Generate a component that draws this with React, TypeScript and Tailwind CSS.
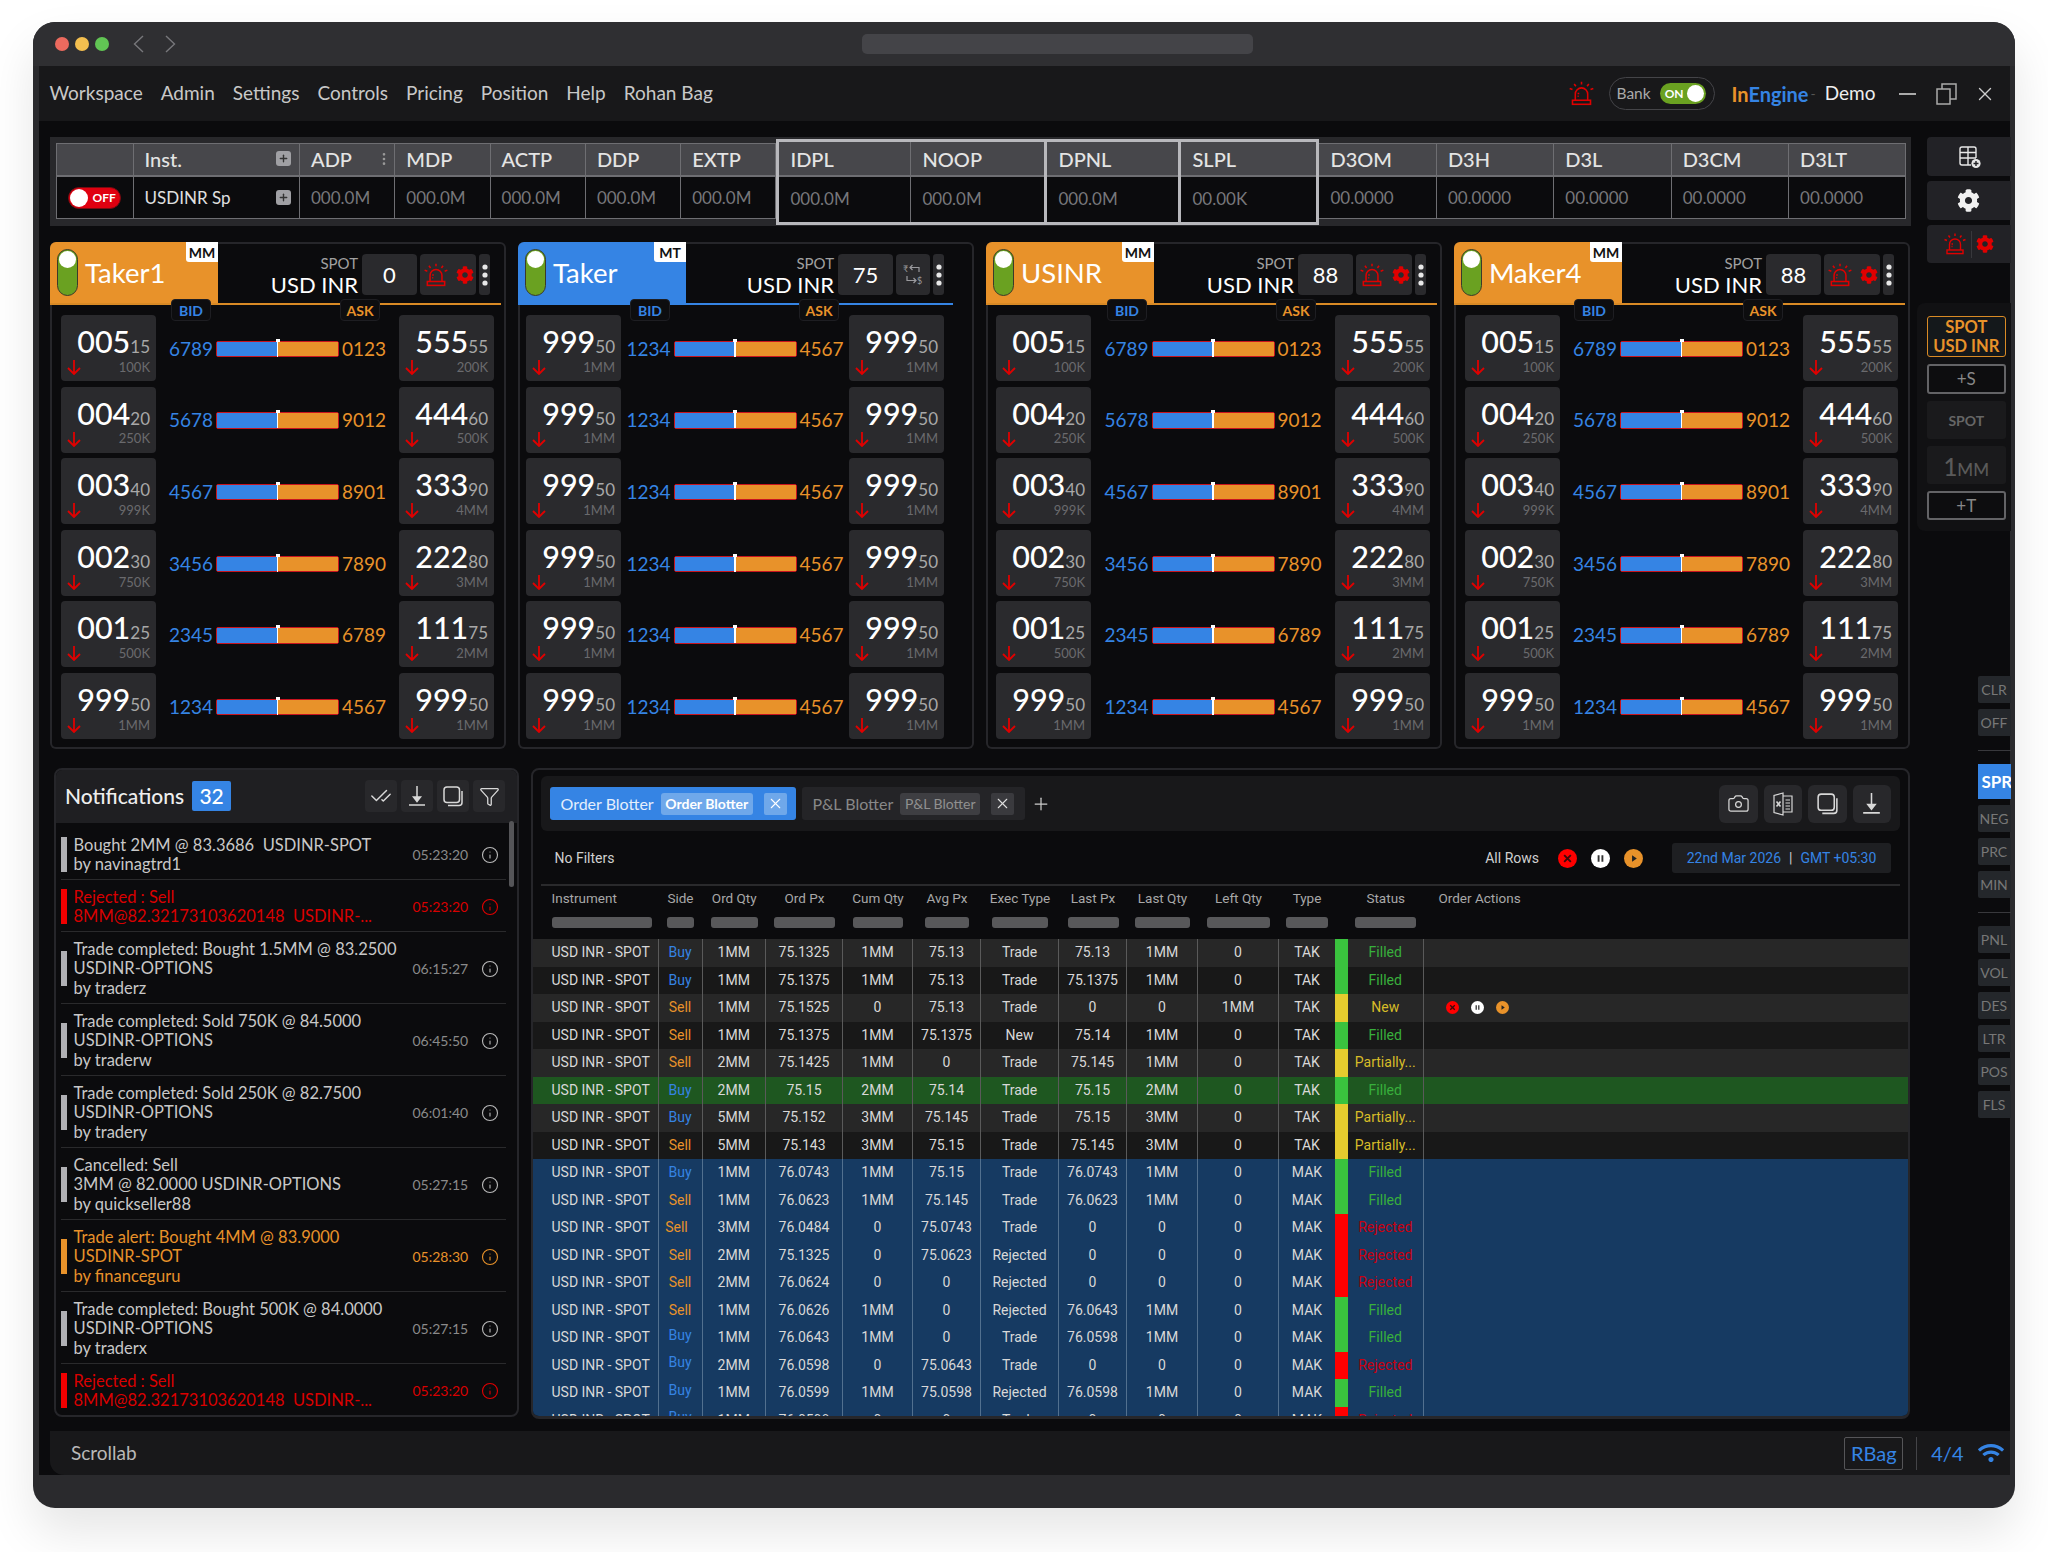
import { Camera, CheckCheck, EllipsisVertical, Funnel, Info, Plus, X } from 'lucide-react'
import { FaCog, FaWifi } from 'react-icons/fa'

const BLUE = '#3584e4'

const SirenIcon = ({ size = 24 }: { size?: number }) => (
  <svg width={size} height={size} viewBox="0 0 24 24" fill="none" stroke="#e00000" strokeWidth="1.4">
    <path d="M6.5 18V12.5a5.5 5.5 0 0 1 11 0V18" />
    <rect x="4" y="18" width="16" height="3.6" />
    <path d="M12 1.5v2.5M5.5 3.5l1.5 2M18.5 3.5l-1.5 2M1.5 7.5l2.5 1M22.5 7.5l-2.5 1M8.5 12h1.5M8.5 14.5h1" />
  </svg>
)

const TablePlusIcon = () => (
  <svg width="26" height="26" viewBox="0 0 26 26" fill="none" stroke="#e8e8e8" strokeWidth="1.4">
    <path d="M15 21H6a2 2 0 0 1-2-2V5a2 2 0 0 1 2-2h12a2 2 0 0 1 2 2v9M4 8.5h16M4 14h16M12 3v18" />
    <circle cx="20" cy="19.5" r="4.6" fill="#e8e8e8" stroke="none" />
    <path d="M20 17v5M17.5 19.5h5" stroke="#222226" />
  </svg>
)

const SwapIcon = () => (
  <svg width="22" height="24" viewBox="0 0 22 24" fill="none" stroke="#9a9a9e" strokeWidth="1.2">
    <text x="1" y="9" fontSize="9" fill="#9a9a9e" stroke="none">₹</text>
    <text x="15" y="21" fontSize="9" fill="#9a9a9e" stroke="none">$</text>
    <path d="M17 9V4.5H8M10.5 2L8 4.5 10.5 7M5 13v4.5h9M11.5 15l2.5 2.5-2.5 2.5" />
  </svg>
)

const CopyIcon = ({ size = 24, color = '#d8d8d8' }: { size?: number; color?: string }) => (
  <svg width={size} height={size} viewBox="0 0 24 24" fill="none" stroke={color} strokeWidth="1.5">
    <rect x="3" y="3" width="15.5" height="15.5" rx="3" />
    <path d="M21 7v11.5a3 3 0 0 1-3 3H7" />
  </svg>
)

const DownloadIcon = ({ size = 24, color = '#d8d8d8' }: { size?: number; color?: string }) => (
  <svg width={size} height={size} viewBox="0 0 24 24" fill="none" stroke={color} strokeWidth="1.5">
    <path d="M12 2v13M4 21h16" />
    <path d="M8.5 13h7L12 17.5z" fill={color} />
  </svg>
)

const ExcelIcon = () => (
  <svg width="24" height="26" viewBox="0 0 24 26" fill="none" stroke="#d8d8d8" strokeWidth="1.2">
    <path d="M12 2L3 4.5v17L12 24z" />
    <path d="M12 5h9v16h-9M14.5 9H19M14.5 12H19M14.5 15H19M14.5 18H19" />
    <path d="M5.5 10.5l4 5M9.5 10.5l-4 5" strokeWidth="1.6" />
  </svg>
)

const RoundAction = ({ kind, size }: { kind: 'x' | 'pause' | 'play'; size: number }) => {
  if (kind === 'x') {
    return (
      <svg width={size} height={size} viewBox="0 0 20 20">
        <circle cx="10" cy="10" r="10" fill="#ff0000" />
        <path d="M6.5 6.5l7 7M13.5 6.5l-7 7" stroke="#3a0a0a" strokeWidth="2" />
      </svg>
    )
  }
  if (kind === 'pause') {
    return (
      <svg width={size} height={size} viewBox="0 0 20 20">
        <circle cx="10" cy="10" r="10" fill="#ffffff" />
        <path d="M8 6.5v7M12 6.5v7" stroke="#333" strokeWidth="2" />
      </svg>
    )
  }
  return (
    <svg width={size} height={size} viewBox="0 0 20 20">
      <circle cx="10" cy="10" r="10" fill="#e8922a" />
      <path d="M8.5 6.5l5 3.5-5 3.5z" fill="#222" />
    </svg>
  )
}

const PlusChip = () => (
  <div className="ml-auto mr-[8px] flex h-[15px] w-[15px] items-center justify-center rounded-[3px] bg-[#a0a0a4]">
    <Plus size={11} strokeWidth={3} color="#333" />
  </div>
)

const menuItems = ['Workspace', 'Admin', 'Settings', 'Controls', 'Pricing', 'Position', 'Help', 'Rohan Bag']

const TitleBar = () => (
  <div className="flex h-[44px] shrink-0 items-center bg-[#2f2f32] pl-[22px]">
    <div className="flex gap-[6px]">
      <div className="h-[14px] w-[14px] rounded-full bg-[#ec6a5e]" />
      <div className="h-[14px] w-[14px] rounded-full bg-[#f4bf4f]" />
      <div className="h-[14px] w-[14px] rounded-full bg-[#61c554]" />
    </div>
    <div className="ml-[24px] flex gap-[21px]">
      <svg width="11" height="18" viewBox="0 0 11 18" fill="none" stroke="#77777b" strokeWidth="1.4">
        <path d="M10 1L1.5 9l8.5 8" />
      </svg>
      <svg width="11" height="18" viewBox="0 0 11 18" fill="none" stroke="#77777b" strokeWidth="1.4">
        <path d="M1 1l8.5 8L1 17" />
      </svg>
    </div>
    <div className="ml-[686px] h-[20px] w-[391px] rounded-[5px] bg-[#444448]" />
  </div>
)

const MenuBar = () => (
  <div className="flex h-[55px] shrink-0 items-center bg-[#18181a] pl-[11px] pr-[14px] text-[19px] text-[#c8c8c8]">
    <div className="flex gap-[18px]">
      {menuItems.map((item) => (
        <span key={item}>{item}</span>
      ))}
    </div>
    <div className="ml-auto">
      <SirenIcon size={27} />
    </div>
    <div className="ml-[14px] flex h-[33px] w-[106px] items-center rounded-full border-[1.5px] border-[#444448] pl-[7px]">
      <span className="text-[15.5px] text-[#aaaaaa]">Bank</span>
      <div className="ml-[9px] flex h-[21px] w-[46px] items-center justify-between rounded-full bg-[#6aa121] pl-[5px] pr-[2px]">
        <span className="text-[12px] font-bold text-white">ON</span>
        <div className="h-[17px] w-[17px] rounded-full bg-white" />
      </div>
    </div>
    <div className="ml-[17px] text-[20px] font-bold">
      <span className="text-[#e8922a]">In</span>
      <span className="text-[#3584e4]">Engine</span>
    </div>
    <span className="ml-[2px] text-[14px] text-[#555]">-</span>
    <span className="ml-[9px] text-[19px] text-[#eeeeee]">Demo</span>
    <div className="ml-[23px] h-[2px] w-[17px] bg-[#aaaaaa]" />
    <svg className="ml-[20px]" width="21" height="22" viewBox="0 0 21 22" fill="none" stroke="#aaaaaa" strokeWidth="1.5">
      <rect x="1" y="6" width="13" height="15" />
      <path d="M6 6V1h14v15h-6" />
    </svg>
    <X className="ml-[17px]" size={22} strokeWidth={1.5} color="#cccccc" />
  </div>
)

type InstCol = { label: string; value: string; w: string; menu?: boolean; grouped?: boolean }

const InstCell = ({ label, value, w, menu, grouped }: InstCol) => (
  <div className={`${w} flex flex-col border-r-[1.5px] border-[#6e6e72] last:border-r-0`}>
    <div
      className={`${grouped ? 'h-[35px] pt-[1px]' : 'h-[33px] pb-[2px]'} flex items-center border-b-[2px] border-[#6e6e72] bg-[#47474b] pl-[11px] text-[20px] font-medium text-[#e4e4e4]`}
    >
      {label}
      {menu && (
        <div className="ml-auto mr-[2px]">
          <EllipsisVertical size={16} color="#999" />
        </div>
      )}
    </div>
    <div
      className={`${grouped ? 'pb-[2px]' : ''} flex flex-1 items-center bg-[#0b0b0d] pl-[11px] text-[17px] text-[#77777b]`}
    >
      {value}
    </div>
  </div>
)

const InstrumentTable = () => (
  <div className="h-[89px] w-[1861px] bg-[#28282b] px-[5.5px] py-[6px]">
    <div className="flex h-[76px] border-[1.5px] border-[#6e6e72]">
      <div className="flex w-[77px] flex-col border-r-[1.5px] border-[#6e6e72]">
        <div className="h-[33px] border-b-[2px] border-[#6e6e72] bg-[#47474b]" />
        <div className="flex flex-1 items-center bg-[#0b0b0d] pl-[11px]">
          <div className="flex h-[22px] w-[53px] items-center rounded-full border border-[#7a0a10] bg-[#e00010] pl-[1px]">
            <div className="h-[18px] w-[18px] rounded-full bg-white" />
            <span className="ml-[5px] text-[12px] font-bold text-white">OFF</span>
          </div>
        </div>
      </div>
      <div className="flex w-[166.5px] flex-col border-r-[1.5px] border-[#6e6e72]">
        <div className="flex h-[33px] items-center border-b-[2px] border-[#6e6e72] bg-[#47474b] pb-[2px] pl-[11px] text-[20px] font-medium text-[#e4e4e4]">
          Inst.
          <PlusChip />
        </div>
        <div className="flex flex-1 items-center bg-[#0b0b0d] pl-[11px] text-[17px] text-[#e0e0e0]">
          USDINR Sp
          <PlusChip />
        </div>
      </div>
      <InstCell label="ADP" value="000.0M" w="w-[95.3px]" menu />
      <InstCell label="MDP" value="000.0M" w="w-[95.3px]" />
      <InstCell label="ACTP" value="000.0M" w="w-[95.3px]" />
      <InstCell label="DDP" value="000.0M" w="w-[95.3px]" />
      <InstCell label="EXTP" value="000.0M" w="w-[95.3px]" />
      <div className="z-10 -mb-[7px] -mt-[5px] flex w-[271px] border-[3px] border-[#b8b8bc]">
        <InstCell label="IDPL" value="000.0M" w="w-[132px]" grouped />
        <InstCell label="NOOP" value="000.0M" w="w-[133px]" grouped />
      </div>
      <div className="z-10 -mb-[7px] -mt-[5px] flex w-[134px] border-[3px] border-l-0 border-[#b8b8bc]">
        <InstCell label="DPNL" value="000.0M" w="w-[131px]" grouped />
      </div>
      <div className="z-10 -mb-[7px] -mt-[5px] flex w-[138px] border-[3px] border-l-0 border-[#b8b8bc]">
        <InstCell label="SLPL" value="00.00K" w="w-[135px]" grouped />
      </div>
      <InstCell label="D3OM" value="00.0000" w="w-[117.4px]" />
      <InstCell label="D3H" value="00.0000" w="w-[117.4px]" />
      <InstCell label="D3L" value="00.0000" w="w-[117.4px]" />
      <InstCell label="D3CM" value="00.0000" w="w-[117.4px]" />
      <InstCell label="D3LT" value="00.0000" w="flex-1" />
    </div>
  </div>
)

const makerRows = [
  ['005', '15', '100K', '6789', '0123', '555', '55', '200K'],
  ['004', '20', '250K', '5678', '9012', '444', '60', '500K'],
  ['003', '40', '999K', '4567', '8901', '333', '90', '4MM'],
  ['002', '30', '750K', '3456', '7890', '222', '80', '3MM'],
  ['001', '25', '500K', '2345', '6789', '111', '75', '2MM'],
  ['999', '50', '1MM', '1234', '4567', '999', '50', '1MM'],
]
const takerRows = Array.from({ length: 6 }, () => makerRows[5])

const PriceBox = ({ big, small, size }: { big: string; small: string; size: string }) => (
  <div className="flex h-[66px] w-[95px] shrink-0 flex-col rounded-[4px] bg-[#2a2a2d] pl-[6px] pr-[6px] pt-[4px]">
    <div className="flex h-[41.5px] items-baseline justify-end">
      <span className="text-[30.5px] font-medium text-white">{big}</span>
      <span className="text-[17px] text-[#a8a8a8]">{small}</span>
    </div>
    <div className="flex h-[14px] items-center justify-between">
      <svg width="14" height="15" viewBox="0 0 14 15" fill="none" stroke="#e00000" strokeWidth="1.8">
        <path d="M7 0v14M1 8l6 6 6-6" />
      </svg>
      <span className="text-[13px] text-[#6a6a6e]">{size}</span>
    </div>
  </div>
)

const DepthBar = () => (
  <div className="relative flex h-[16.5px] w-[123px] shrink-0 rounded-[2px] border-[1.5px] border-[#c8141e]">
    <div className="w-1/2 bg-[#3584e4]" />
    <div className="w-1/2 bg-[#e8922a]" />
    <div className="absolute -top-[3px] left-[59.5px] h-[18px] w-[1.5px] bg-white" />
    <div className="absolute -top-[3px] left-[58.5px] h-[3px] w-[4px] bg-white" />
  </div>
)

type CardProps = {
  name: string
  tag: string
  value: string
  color: 'orange' | 'blue'
  rows: string[][]
  swap?: boolean
  lineMargin: string
  headPad: string
  rowPad: string
  bidLeft: string
  askLeft: string
}

const TradeCard = ({ name, tag, value, color, rows, swap, lineMargin, headPad, rowPad, bidLeft, askLeft }: CardProps) => (
  <div className="relative h-[507px] overflow-hidden rounded-[6px] shadow-[inset_0_0_0_2px_#26262a]">
    <div
      className={`${lineMargin} ${color === 'orange' ? 'border-[#d98a25]' : 'border-[#3584e4]'} flex h-[63px] border-b-[2px]`}
    >
      <div
        className={`${color === 'orange' ? 'bg-[#e8922a]' : 'bg-[#3584e4]'} relative flex h-[61px] w-[168px] shrink-0 items-center pl-[7px]`}
      >
        <div className="h-[47px] w-[21px] rounded-full border-[1.5px] border-[#3a3a2a] bg-[#6aa121] pt-[1px]">
          <div className="mx-auto h-[17px] w-[17px] rounded-full bg-white" />
        </div>
        <span className="ml-[7px] text-[27.5px] text-white">{name}</span>
        <div className="absolute right-0 top-0 flex h-[20px] w-[32px] items-center justify-center rounded-bl-[3px] bg-white text-[14px] font-bold text-[#111]">
          {tag}
        </div>
      </div>
      <div className={`${headPad} flex flex-1 items-start justify-end gap-[3px] pt-[12px]`}>
        <div className="mr-[1px] flex flex-col items-end leading-none">
          <span className="mt-[1px] text-[15px] leading-[17px] text-[#a0a0a0]">SPOT</span>
          <span className="text-[22px] leading-[26px] text-white">USD INR</span>
        </div>
        <div className="flex h-[41px] w-[55px] items-center justify-center rounded-[4px] bg-[#2a2a2d] text-[22px] text-white">
          {value}
        </div>
        {swap ? (
          <div className="flex h-[41px] w-[34px] items-center justify-center rounded-[4px] bg-[#2a2a2d]">
            <SwapIcon />
          </div>
        ) : (
          <div className="flex h-[41px] w-[56px] items-center justify-center gap-[7px] rounded-[4px] bg-[#2a2a2d]">
            <SirenIcon size={26} />
            <FaCog size={18} color="#e00000" />
          </div>
        )}
        <div className="flex h-[41px] w-[11px] items-center justify-center rounded-[3px] bg-[#2a2a2d]">
          <svg width="6" height="22" viewBox="0 0 6 22" fill="#e8e8e8">
            <circle cx="3" cy="3" r="2.6" />
            <circle cx="3" cy="11" r="2.6" />
            <circle cx="3" cy="19" r="2.6" />
          </svg>
        </div>
      </div>
    </div>
    <div
      className={`${bidLeft} absolute top-[57px] flex h-[22px] w-[40px] items-center justify-center rounded-[4px] border border-[#1e1e22] bg-[#0d0d0f] text-[14px] font-bold text-[#3584e4]`}
    >
      BID
    </div>
    <div
      className={`${askLeft} absolute top-[57px] flex h-[22px] w-[40px] items-center justify-center rounded-[4px] border border-[#1e1e22] bg-[#0d0d0f] text-[14px] font-bold text-[#e8922a]`}
    >
      ASK
    </div>
    <div className={`${rowPad} flex flex-col gap-[5.6px] pt-[10px]`}>
      {rows.map((r, i) => (
        <div key={i} className="flex items-center">
          <PriceBox big={r[0]} small={r[1]} size={r[2]} />
          <div className="flex flex-1 items-center justify-center gap-[3px] pt-[2px]">
            <span className="w-[45px] text-right text-[19px] text-[#3584e4]">{r[3]}</span>
            <DepthBar />
            <span className="w-[45px] text-[19px] text-[#e8922a]">{r[4]}</span>
          </div>
          <PriceBox big={r[5]} small={r[6]} size={r[7]} />
        </div>
      ))}
    </div>
  </div>
)

type Note = { lines: string[]; time: string; tone?: 'red' | 'orange' }

const notes: Note[] = [
  { lines: ['Bought 2MM @ 83.3686  USDINR-SPOT', 'by navinagtrd1'], time: '05:23:20' },
  { lines: ['Rejected : Sell', '8MM@82.32173103620148  USDINR-...'], time: '05:23:20', tone: 'red' },
  { lines: ['Trade completed: Bought 1.5MM @ 83.2500', 'USDINR-OPTIONS', 'by traderz'], time: '06:15:27' },
  { lines: ['Trade completed: Sold 750K @ 84.5000', 'USDINR-OPTIONS', 'by traderw'], time: '06:45:50' },
  { lines: ['Trade completed: Sold 250K @ 82.7500', 'USDINR-OPTIONS', 'by tradery'], time: '06:01:40' },
  { lines: ['Cancelled: Sell', '3MM @ 82.0000 USDINR-OPTIONS', 'by quickseller88'], time: '05:27:15' },
  { lines: ['Trade alert: Bought 4MM @ 83.9000', 'USDINR-SPOT', 'by financeguru'], time: '05:28:30', tone: 'orange' },
  { lines: ['Trade completed: Bought 500K @ 84.0000', 'USDINR-OPTIONS', 'by traderx'], time: '05:27:15' },
  { lines: ['Rejected : Sell', '8MM@82.32173103620148  USDINR-...'], time: '05:23:20', tone: 'red' },
]

const NoteRow = ({ lines, time, tone }: Note) => {
  const text = tone === 'red' ? 'text-[#d90000]' : tone === 'orange' ? 'text-[#e8922a]' : 'text-[#c8c8c8]'
  const timeText = tone === 'red' ? 'text-[#d90000]' : tone === 'orange' ? 'text-[#e8922a]' : 'text-[#8a8a8a]'
  const bar = tone === 'red' ? 'bg-[#f00000]' : tone === 'orange' ? 'bg-[#e8922a]' : 'bg-[#b0b0b4]'
  const iconColor = tone === 'red' ? '#e00000' : tone === 'orange' ? '#e8922a' : '#b8b8b8'
  return (
    <div
      className={`${lines.length === 3 ? 'h-[72px]' : 'h-[52px]'} flex shrink-0 items-center border-b-[1.5px] border-[#2a2a2c] pt-[2px]`}
    >
      <div className={`${bar} h-[35px] w-[5.5px] shrink-0`} />
      <div className={`${text} ml-[7px] w-[339px] whitespace-pre pt-[1px] text-[16.5px] leading-[19.4px]`}>
        {lines.map((l) => (
          <div key={l}>{l}</div>
        ))}
      </div>
      <span className={`${timeText} text-[14px]`}>{time}</span>
      <Info className="ml-[13px]" size={18} strokeWidth={1.5} color={iconColor} />
    </div>
  )
}

const Notifications = () => (
  <div className="relative ml-[4px] flex h-[649px] w-[465px] shrink-0 flex-col overflow-hidden rounded-[8px] border-2 border-[#26262a]">
    <div className="flex h-[53px] shrink-0 items-center bg-[#1f1f22] pb-[1px] pl-[9px] pr-[12px]">
      <span className="text-[21px] font-medium text-[#eeeeee]">Notifications</span>
      <div className="ml-[8px] flex h-[30px] w-[39px] items-center justify-center rounded-[2px] bg-[#3584e4] text-[21px] font-medium text-white">
        32
      </div>
      <div className="ml-auto flex gap-[4px]">
        {[
          <CheckCheck key="c" size={22} strokeWidth={1.6} color="#d8d8d8" />,
          <DownloadIcon key="d" />,
          <CopyIcon key="p" />,
          <Funnel key="f" size={21} strokeWidth={1.5} color="#d8d8d8" />,
        ].map((icon) => (
          <div key={icon.key} className="flex h-[32px] w-[32px] items-center justify-center rounded-[4px] bg-[#28282b]">
            {icon}
          </div>
        ))}
      </div>
    </div>
    <div className="flex flex-1 flex-col overflow-hidden pl-[5px] pr-[11px] pt-[5px]">
      {notes.map((n, i) => (
        <NoteRow key={i} {...n} />
      ))}
    </div>
    <div className="absolute right-[3px] top-[51px] h-[66px] w-[5px] rounded-full bg-[#555558]" />
  </div>
)

const blotterCols =
  'grid-cols-[126px_44px_63.5px_77px_70px_68px_78px_68px_71px_81px_56px_13px_75.5px_1fr]'

const headers = [
  { label: 'Instrument', input: 'w-[100px]' },
  { label: 'Side', input: 'w-[27px]' },
  { label: 'Ord Qty', input: 'w-[47px]' },
  { label: 'Ord Px', input: 'w-[61px]' },
  { label: 'Cum Qty', input: 'w-[50px]' },
  { label: 'Avg Px', input: 'w-[44px]' },
  { label: 'Exec Type', input: 'w-[56px]' },
  { label: 'Last Px', input: 'w-[51px]' },
  { label: 'Last Qty', input: 'w-[55px]' },
  { label: 'Left Qty', input: 'w-[63px]' },
  { label: 'Type', input: 'w-[42px]' },
]

const orderRows = [
  'Buy 1MM 75.1325 1MM 75.13 Trade 75.13 1MM 0 TAK Filled',
  'Buy 1MM 75.1375 1MM 75.13 Trade 75.1375 1MM 0 TAK Filled',
  'Sell 1MM 75.1525 0 75.13 Trade 0 0 1MM TAK New',
  'Sell 1MM 75.1375 1MM 75.1375 New 75.14 1MM 0 TAK Filled',
  'Sell 2MM 75.1425 1MM 0 Trade 75.145 1MM 0 TAK Partially...',
  'Buy 2MM 75.15 2MM 75.14 Trade 75.15 2MM 0 TAK Filled',
  'Buy 5MM 75.152 3MM 75.145 Trade 75.15 3MM 0 TAK Partially...',
  'Sell 5MM 75.143 3MM 75.15 Trade 75.145 3MM 0 TAK Partially...',
  'Buy 1MM 76.0743 1MM 75.15 Trade 76.0743 1MM 0 MAK Filled',
  'Sell 1MM 76.0623 1MM 75.145 Trade 76.0623 1MM 0 MAK Filled',
  'Sell 3MM 76.0484 0 75.0743 Trade 0 0 0 MAK Rejected',
  'Sell 2MM 75.1325 0 75.0623 Rejected 0 0 0 MAK Rejected',
  'Sell 2MM 76.0624 0 0 Rejected 0 0 0 MAK Rejected',
  'Sell 1MM 76.0626 1MM 0 Rejected 76.0643 1MM 0 MAK Filled',
  'Buy 1MM 76.0643 1MM 0 Trade 76.0598 1MM 0 MAK Filled',
  'Buy 2MM 76.0598 0 75.0643 Trade 0 0 0 MAK Rejected',
  'Buy 1MM 76.0599 1MM 75.0598 Rejected 76.0598 1MM 0 MAK Filled',
  'Buy 1MM 76.0598 0 0 Trade 0 0 0 MAK Rejected',
].map((r) => r.split(' '))

const rowBg = (i: number) => {
  if (i === 5) return 'bg-[#1e5720]'
  if (i >= 8) return 'bg-[#163a62]'
  return i % 2 === 0 ? 'bg-[#272727]' : 'bg-[#181818]'
}

const statusBar = (s: string) => {
  if (s === 'Filled') return 'bg-[#3ac33e]'
  if (s === 'Rejected') return 'bg-[#ff0000]'
  return 'bg-[#e5cc2e]'
}

const statusText = (s: string) => {
  if (s === 'Filled') return 'text-[#38b03c]'
  if (s === 'Rejected') return 'text-[#c80010]'
  return 'text-[#d8bc28]'
}

const OrderRow = ({ row, i }: { row: string[]; i: number }) => {
  const sep = i >= 8 ? 'border-[#52708f]' : 'border-[#5a5a5a]'
  const status = row[10]
  const nudge = i >= 14 ? 'pb-[5px]' : i === 10 ? 'pr-[7px]' : ''
  return (
    <div className={`${rowBg(i)} grid h-[27.5px] ${blotterCols} text-[14px] text-[#d8d8d8]`}>
      <div className={`${sep} flex items-center border-r pl-[19px]`}>USD INR - SPOT</div>
      <div
        className={`${sep} ${nudge} ${row[0] === 'Buy' ? 'text-[#3584e4]' : 'text-[#e8922a]'} flex items-center justify-center border-r`}
      >
        {row[0]}
      </div>
      {row.slice(1, 9).map((c, j) => (
        <div key={j} className={`${sep} flex items-center justify-center border-r`}>
          {c}
        </div>
      ))}
      <div className="flex items-center justify-center">{row[9]}</div>
      <div className={statusBar(status)} />
      <div className={`${sep} ${statusText(status)} flex items-center justify-center whitespace-nowrap border-r`}>
        {status}
      </div>
      <div className="flex items-center gap-[12px] pl-[22px]">
        {i === 2 && (
          <>
            <RoundAction kind="x" size={13} />
            <RoundAction kind="pause" size={13} />
            <RoundAction kind="play" size={13} />
          </>
        )}
      </div>
    </div>
  )
}

const Blotter = () => (
  <div className="h-[651px] flex-1 overflow-hidden rounded-[8px] border-2 border-b-[3px] border-[#26262a] font-['Roboto',sans-serif]">
    <div className="mx-[8px] mt-[6px] flex h-[55px] items-center rounded-[6px] bg-[#18181a] pl-[9px] pr-[9px] font-['Lato',sans-serif]">
      <div className="flex h-[33px] w-[246px] items-center rounded-[3px] bg-[#3584e4] pl-[11px] text-[16px] text-[#e4eefc]">
        Order Blotter
        <div className="ml-[7px] flex h-[22px] w-[92px] items-center justify-center rounded-[3px] bg-[#6fa8ea] text-[14px] font-bold text-white">
          Order Blotter
        </div>
        <div className="ml-[11px] flex h-[22px] w-[23px] items-center justify-center rounded-[2px] bg-[#6fa8ea]">
          <X size={17} strokeWidth={1.5} color="#fff" />
        </div>
      </div>
      <div className="ml-[6px] flex h-[33px] w-[223px] items-center rounded-[3px] bg-[#242427] pl-[11px] text-[16px] text-[#888888]">
        P&amp;L Blotter
        <div className="ml-[7px] flex h-[22px] w-[80px] items-center justify-center rounded-[3px] bg-[#3e3e42] text-[14px] text-[#909090]">
          P&amp;L Blotter
        </div>
        <div className="ml-[11px] flex h-[22px] w-[23px] items-center justify-center rounded-[2px] bg-[#3a3a3e]">
          <X size={17} strokeWidth={1.5} color="#e0e0e0" />
        </div>
      </div>
      <Plus className="ml-[6px]" size={20} strokeWidth={1.5} color="#cccccc" />
      <div className="ml-auto flex gap-[6px]">
        {[
          <Camera key="a" size={23} strokeWidth={1.3} color="#d8d8d8" />,
          <ExcelIcon key="b" />,
          <CopyIcon key="c" size={25} />,
          <DownloadIcon key="d" size={25} />,
        ].map((icon) => (
          <div key={icon.key} className="flex h-[38px] w-[38.5px] items-center justify-center rounded-[6px] bg-[#28282b]">
            {icon}
          </div>
        ))}
      </div>
    </div>
    <div className="mx-[8px] flex h-[55px] items-center border-b-2 border-[#2a2a2c] pl-[14px] pr-[9px] pt-[1px] text-[14px] text-[#d0d0d0]">
      No Filters
      <span className="ml-auto">All Rows</span>
      <div className="ml-[19px] flex gap-[14px]">
        <RoundAction kind="x" size={19} />
        <RoundAction kind="pause" size={19} />
        <RoundAction kind="play" size={19} />
      </div>
      <div className="ml-[29px] flex h-[30px] w-[219px] items-center justify-center gap-[8px] rounded-[3px] bg-[#1e1f22] text-[14px] text-[#3584e4]">
        <span>22nd Mar 2026</span>
        <span className="text-[#cccccc]">|</span>
        <span>GMT +05:30</span>
      </div>
    </div>
    <div className={`grid h-[53px] ${blotterCols} text-[13.5px] text-[#a8a8a8]`}>
      {headers.map((h, i) => (
        <div key={h.label} className={`${i === 0 ? 'items-start pl-[19px]' : 'items-center'} flex flex-col`}>
          <span className="mt-[1px] h-[22px] leading-[22px]">{h.label}</span>
          <div className={`${h.input} mt-[8px] h-[11px] rounded-[3px] bg-[#58585a]`} />
        </div>
      ))}
      <div />
      <div className="flex flex-col items-center">
        <span className="mt-[1px] h-[22px] leading-[22px]">Status</span>
        <div className="mt-[8px] h-[11px] w-[61px] rounded-[3px] bg-[#58585a]" />
      </div>
      <span className="ml-[15px] mt-[1px] h-[22px] leading-[22px]">Order Actions</span>
    </div>
    {orderRows.map((row, i) => (
      <OrderRow key={i} row={row} i={i} />
    ))}
  </div>
)

const SideTag = ({ label }: { label: string }) => (
  <div className="flex h-[27px] w-[33px] items-center justify-center rounded-l-[2px] bg-[#24272b] text-[14px] text-[#777777]">
    {label}
  </div>
)

const SideRail = () => (
  <div className="ml-[6px] flex w-[93.5px] shrink-0 flex-col pt-[16px]">
    <div className="ml-[10px] flex flex-col gap-[5px]">
      <div className="flex h-[39px] items-center justify-center rounded-l-[4px] bg-[#222226]">
        <TablePlusIcon />
      </div>
      <div className="flex h-[39px] items-center justify-center rounded-l-[4px] bg-[#222226]">
        <FaCog size={23} color="#f0f0f0" />
      </div>
      <div className="flex h-[38px] items-center justify-center gap-[4px] rounded-l-[4px] bg-[#222226]">
        <SirenIcon size={24} />
        <div className="h-[27px] w-px bg-[#38383c]" />
        <FaCog size={18} color="#e00000" />
      </div>
    </div>
    <div className="mt-[40px] flex h-[228px] flex-col gap-[7px] rounded-l-[8px] bg-[#111113] pl-[10px] pr-[5px] pt-[13px]">
      <div className="flex h-[41px] flex-col items-center justify-center rounded-[3px] border-[1.5px] border-[#d98a25] bg-[#14181b] text-[16.5px] font-bold leading-[19px] text-[#e8922a]">
        <span>SPOT</span>
        <span>USD INR</span>
      </div>
      <div className="flex h-[30px] items-center justify-center rounded-[3px] border-2 border-[#636366] bg-[#0d0d0f] text-[17px] text-[#888888]">
        +S
      </div>
      <div className="flex h-[38px] items-center justify-center rounded-[3px] bg-[#1a1a1c] text-[14px] font-bold text-[#666666]">
        SPOT
      </div>
      <div className="flex h-[38px] items-baseline justify-center rounded-[3px] bg-[#1a1a1c] pt-[3px] text-[24px] font-medium text-[#5a5a5a]">
        1<span className="text-[17px]">MM</span>
      </div>
      <div className="flex h-[29px] items-center justify-center rounded-[3px] border-2 border-[#636366] bg-[#0d0d0f] text-[17px] text-[#888888]">
        +T
      </div>
    </div>
    <div className="ml-auto mt-[145px] flex w-[33px] flex-col gap-[6px]">
      <SideTag label="CLR" />
      <SideTag label="OFF" />
      <div className="my-[7.5px] h-px bg-[#38383c]" />
      <div className="flex h-[35px] items-center overflow-hidden bg-[#3584e4] pl-[4px] text-[17px] font-bold text-white">
        SPR
      </div>
      <SideTag label="NEG" />
      <SideTag label="PRC" />
      <SideTag label="MIN" />
      <div className="my-[7.5px] h-px bg-[#38383c]" />
      <SideTag label="PNL" />
      <SideTag label="VOL" />
      <SideTag label="DES" />
      <SideTag label="LTR" />
      <SideTag label="POS" />
      <SideTag label="FLS" />
    </div>
  </div>
)

const Footer = () => (
  <div className="ml-[11.5px] flex h-[44px] shrink-0 items-center rounded-bl-[14px] bg-[#18181a] pl-[21px] pr-[6px] text-[19px] text-[#b8b8b8]">
    Scrollab
    <div className="ml-auto flex h-[33px] w-[59px] items-center justify-center rounded-[2px] border-[1.5px] border-[#555558] text-[20px] text-[#3584e4]">
      RBag
    </div>
    <div className="ml-[13px] h-[33px] w-px bg-[#444448]" />
    <span className="ml-[14px] text-[20px] text-[#3584e4]">4/4</span>
    <FaWifi className="ml-[14px]" size={26} color={BLUE} />
  </div>
)

export default function App() {
  return (
    <div className="h-[1552px] w-[2048px] overflow-hidden bg-white pl-[33px] pt-[22px] font-['Lato',sans-serif]">
      <div className="flex h-[1486px] w-[1982px] flex-col overflow-hidden rounded-[22px] bg-[#2a2a2d] shadow-[0_24px_48px_rgba(0,0,0,0.1)]">
        <TitleBar />
        <div className="mx-[5.5px] mb-[33px] flex flex-1 flex-col bg-[#0b0b0d]">
          <MenuBar />
          <div className="flex h-[1310px] shrink-0 pl-[11.5px]">
            <div className="w-[1861px] shrink-0 pt-[16px]">
              <InstrumentTable />
              <div className="mt-[16px] grid w-[1860px] grid-cols-4 gap-[12px]">
                <TradeCard
                  name="Taker1"
                  tag="MM"
                  value="0"
                  color="orange"
                  rows={makerRows}
                  lineMargin="mr-[5px]"
                  headPad="pr-[11px]"
                  rowPad="pl-[11px] pr-[12px]"
                  bidLeft="left-[121px]"
                  askLeft="left-[290px]"
                />
                <TradeCard
                  name="Taker"
                  tag="MT"
                  value="75"
                  color="blue"
                  rows={takerRows}
                  swap
                  lineMargin="mr-[21px]"
                  headPad="pr-[9px]"
                  rowPad="pl-[8px] pr-[30px]"
                  bidLeft="left-[112px]"
                  askLeft="left-[281px]"
                />
                <TradeCard
                  name="USINR"
                  tag="MM"
                  value="88"
                  color="orange"
                  rows={makerRows}
                  lineMargin="mr-[5px]"
                  headPad="pr-[11px]"
                  rowPad="pl-[10px] pr-[12px]"
                  bidLeft="left-[121px]"
                  askLeft="left-[290px]"
                />
                <TradeCard
                  name="Maker4"
                  tag="MM"
                  value="88"
                  color="orange"
                  rows={makerRows}
                  lineMargin="mr-[5px]"
                  headPad="pr-[11px]"
                  rowPad="pl-[11px] pr-[12px]"
                  bidLeft="left-[120px]"
                  askLeft="left-[289px]"
                />
              </div>
              <div className="mt-[19px] flex w-[1860px] gap-[11.5px]">
                <Notifications />
                <Blotter />
              </div>
            </div>
            <SideRail />
          </div>
          <Footer />
        </div>
      </div>
    </div>
  )
}
